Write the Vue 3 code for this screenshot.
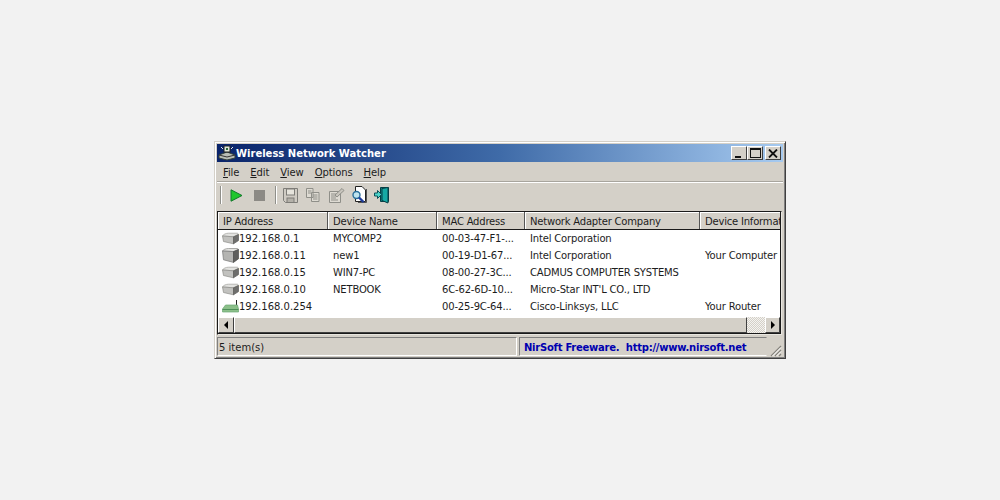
<script setup>
const menus = [
  { first: 'F', rest: 'ile' },
  { first: 'E', rest: 'dit' },
  { first: 'V', rest: 'iew' },
  { first: 'O', rest: 'ptions' },
  { first: 'H', rest: 'elp' },
]
const columns = ['IP Address', 'Device Name', 'MAC Address', 'Network Adapter Company', 'Device Informat']
const rows = [
  { ip: '192.168.0.1', name: 'MYCOMP2', mac: '00-03-47-F1-...', company: 'Intel Corporation', info: '', kind: 'pc' },
  { ip: '192.168.0.11', name: 'new1', mac: '00-19-D1-67...', company: 'Intel Corporation', info: 'Your Computer', kind: 'self' },
  { ip: '192.168.0.15', name: 'WIN7-PC', mac: '08-00-27-3C...', company: 'CADMUS COMPUTER SYSTEMS', info: '', kind: 'pc' },
  { ip: '192.168.0.10', name: 'NETBOOK', mac: '6C-62-6D-10...', company: 'Micro-Star INT\'L CO., LTD', info: '', kind: 'pc' },
  { ip: '192.168.0.254', name: '', mac: '00-25-9C-64...', company: 'Cisco-Linksys, LLC', info: 'Your Router', kind: 'router' },
]
</script>

<template>
  <div class="page">
    <div class="window">
      <div class="titlebar">
        <svg class="app-icon" width="18" height="16" viewBox="0 0 18 16">
          <path d="M1 10 L9 7 L17 10 L17 13 L9 15 L1 13 Z" fill="#b9bdb6" stroke="#33403a" stroke-width="1" />
          <path d="M1 10 L9 12 L17 10" fill="none" stroke="#333" stroke-width="1" />
          <rect x="6" y="1" width="6" height="6" fill="#dfe6d8" stroke="#222" />
          <rect x="8" y="3" width="2" height="2" fill="#2f6b3a" />
          <path d="M3 2 L5 4 M15 2 L13 4" stroke="#e8e8e8" stroke-width="1" />
        </svg>
        <span class="title">Wireless Network Watcher</span>
        <div class="caption-buttons">
          <button class="cap"><span class="glyph-min"></span></button>
          <button class="cap"><span class="glyph-max"></span></button>
          <button class="cap close">
            <svg width="10" height="9" viewBox="0 0 10 9"><path d="M1 0.5 L9 8.5 M9 0.5 L1 8.5" stroke="#111" stroke-width="1.8" /></svg>
          </button>
        </div>
      </div>

      <div class="menubar">
        <span v-for="m in menus" :key="m.first" class="menu"><u>{{ m.first }}</u>{{ m.rest }}</span>
      </div>

      <div class="toolbar">
        <span class="tsep"></span>
        <svg class="tool t-play" width="13" height="13" viewBox="0 0 13 13"><path d="M1 0.8 L12 6.5 L1 12.2 Z" fill="#1fc62c" stroke="#11782a" /></svg>
        <span class="stop"></span>
        <span class="tsep sep2"></span>
        <svg class="tool t-save" width="17" height="17" viewBox="0 0 17 17"><path d="M1.5 1.5 H15.5 V15.5 H3.5 L1.5 13.5 Z" fill="#cfcbc3" stroke="#7e7d78" /><rect x="4.5" y="2" width="8" height="6" fill="#e6e4dc" stroke="#7e7d78" /><rect x="5" y="11" width="7" height="4.5" fill="#b4b1a9" stroke="#7e7d78" /></svg>
        <svg class="tool t-copy" width="16" height="16" viewBox="0 0 16 16"><path d="M1.5 1.5 H8 V10.5 H1.5 Z M6.5 5.5 H14 V14.5 H6.5 Z" fill="#dedbd3" stroke="#8f8f89" /><path d="M3 4 H6.5 M3 6 H6 M8 8 H12.5 M8 10 H12.5 M8 12 H12.5" stroke="#8f8f89" /></svg>
        <svg class="tool t-props" width="17" height="17" viewBox="0 0 17 17"><path d="M1.5 4.5 H12.5 V15.5 H1.5 Z" fill="#dedbd3" stroke="#8f8f89" /><path d="M3 7 H8 M3 9 H9 M3 11 H8 M3 13 H10" stroke="#8f8f89" /><path d="M7 8 L14 1.5 L16 3.5 L9 10 Z" fill="#c8c5bd" stroke="#8f8f89" /></svg>
        <svg class="tool t-find" width="15" height="18" viewBox="0 0 15 18"><path d="M3.5 0.5 H10 L13.5 4 V15.5 H3.5 Z" fill="#fff" stroke="#222" /><path d="M14.5 3 V16.5 H6" fill="none" stroke="#555" /><circle cx="4.5" cy="9" r="3.5" fill="#bfe4ef" stroke="#2a6f9a" stroke-width="1.4" /><path d="M7 11.5 L11.5 16" stroke="#1d3c9c" stroke-width="2.4" /></svg>
        <svg class="tool t-exit" width="15" height="18" viewBox="0 0 15 18"><path d="M6.5 1.5 H14.5 V15.5 H6.5 Z" fill="#0f8f8a" stroke="#063f45" /><path d="M8 2.5 L14 1.5 V17 L8 14.5 Z" fill="#16aaa4" stroke="#073c44" /><path d="M0.5 7 H3.5 V4.5 L7.5 8.5 L3.5 12.5 V10 H0.5 Z" fill="#4fd6cc" stroke="#0a5058" /></svg>
      </div>

      <div class="listview">
        <div class="head">
          <div v-for="c in columns" :key="c" class="hcell">{{ c }}</div>
        </div>
        <div class="rows">
          <div v-for="r in rows" :key="r.ip" class="row">
            <div class="cell first">
              <svg v-if="r.kind === 'pc'" class="dev" width="17" height="13" viewBox="0 0 17 13">
                <path d="M0.5 4 C1 2.5 4 1.2 6.5 1.2 H15 C16 1.2 16.5 2 16 3 L12 4.8 Z" fill="#e3e3e0" stroke="#a0a09c" stroke-width="0.7" />
                <path d="M0.5 4 L11.5 4.8 V11.8 L1.5 9.5 Z" fill="#c2c2bf" stroke="#8c8c88" stroke-width="0.7" />
                <path d="M11.5 4.8 L16.5 2.4 V8.6 L11.5 11.8 Z" fill="#6e6e6c" stroke="#5a5a58" stroke-width="0.7" />
              </svg>
              <svg v-else-if="r.kind === 'self'" class="dev" width="17" height="15" viewBox="0 0 17 15">
                <path d="M0.5 3 C1 1.6 4 0.5 6.5 0.5 H15 C16 0.5 16.5 1.2 16 2 L12 3.6 Z" fill="#e3e3e0" stroke="#8d8d8a" stroke-width="0.7" />
                <path d="M0.5 3 L11.5 3.6 V14.4 L1.5 11.8 Z" fill="#b5b5b2" stroke="#777" stroke-width="0.7" />
                <path d="M11.5 3.6 L16.5 1.4 V10.8 L11.5 14.4 Z" fill="#5f5f5d" stroke="#4d4d4b" stroke-width="0.7" />
              </svg>
              <svg v-else class="dev" width="17" height="13" viewBox="0 0 17 13">
                <path d="M14.5 0 V6" stroke="#222" stroke-width="1" />
                <path d="M0.5 9 L3.5 5 H15.5 L16.5 9 V12 H0.5 Z" fill="#8cc08a" stroke="#6aa873" stroke-width="0.7" />
                <path d="M0.5 9.5 H16.5" stroke="#4f8f5a" stroke-width="1" />
              </svg>
              <span>{{ r.ip }}</span>
            </div>
            <div class="cell">{{ r.name }}</div>
            <div class="cell">{{ r.mac }}</div>
            <div class="cell">{{ r.company }}</div>
            <div class="cell">{{ r.info }}</div>
          </div>
        </div>
        <div class="hscroll">
          <button class="sbtn"><span class="arrow-left"></span></button>
          <div class="strack"><div class="sthumb"></div><div class="shatch"></div></div>
          <button class="sbtn end"><span class="arrow-right"></span></button>
        </div>
      </div>

      <div class="statusbar">
        <div class="spanel left">5 item(s)</div>
        <div class="spanel right">NirSoft Freeware.&nbsp; http://www.nirsoft.net</div>
        <svg class="grip" width="14" height="14" viewBox="0 0 14 14"><path d="M13 3 L3 13 M13 7 L7 13 M13 11 L11 13" stroke="#85837c" stroke-width="1.2" /><path d="M13 4.5 L4.5 13 M13 8.5 L8.5 13" stroke="#fff" stroke-width="1" /></svg>
      </div>
    </div>
  </div>
</template>

<style>
html, body { margin: 0; background: #f2f2f2; }
</style>

<style scoped>
.page {
  width: 1000px;
  height: 500px;
  box-sizing: border-box;
  padding: 141px 0 0 214px;
  background: #f2f2f2;
  overflow: hidden;
  font-family: "DejaVu Sans", Verdana, sans-serif;
  font-size: 10px;
  color: #1c1c1c;
}
.window {
  width: 572px;
  height: 218px;
  box-sizing: border-box;
  padding: 2px;
  background: #d4d0c8;
  border: 1px solid;
  border-color: #d4d0c8 #404040 #404040 #d4d0c8;
  box-shadow: inset 1px 1px 0 #fff, inset -1px -1px 0 #808080;
}
.titlebar {
  height: 18px;
  display: flex;
  align-items: center;
  background: linear-gradient(90deg, #0a246a 0%, #3f6ba8 50%, #a6caf0 100%);
  color: #fff;
  padding-right: 2px;
}
.app-icon { margin-left: 1px; flex: none; }
.title { font-weight: 700; font-size: 10px; }
.caption-buttons { margin-left: auto; display: flex; }
.cap {
  width: 16px;
  height: 14px;
  padding: 0;
  border: 1px solid;
  border-color: #fff #404040 #404040 #fff;
  background: #d4d0c8;
  display: flex;
  align-items: center;
  justify-content: center;
}
.close { margin-left: 2px; }
.glyph-min { width: 6px; height: 2px; background: #111; margin-top: 7px; margin-right: 3px; }
.glyph-max { width: 9px; height: 7px; border: 1px solid #111; border-top-width: 2px; }
.menubar {
  height: 20px;
  box-sizing: border-box;
  padding: 2px 0 0 6px;
  display: flex;
  align-items: center;
  gap: 11px;
  letter-spacing: -0.1px;
  border-bottom: 1px solid #a8a59e;
  box-shadow: 0 1px 0 #fff;
}
.menu { white-space: pre; }
.toolbar {
  height: 26px;
  display: flex;
  align-items: center;
  box-sizing: border-box;
  padding-left: 3px;
}
.tsep { width: 1px; height: 18px; background: #8f8f8a; box-shadow: 1px 0 0 #fff; flex: none; }
.tool { flex: none; margin-left: 8px; }
.t-play { margin-left: 9px; }
.stop { width: 11px; height: 11px; background: #8c8a85; margin-left: 11px; flex: none; }
.sep2 { margin-left: 10px; }
.t-save { margin-left: 6px; }
.t-copy { margin-left: 6px; }
.t-props { margin-left: 7px; }
.t-find { margin-left: 7px; }
.t-exit { margin-left: 7px; }
.listview {
  margin: 3px 1px 0 0;
  height: 124px;
  box-sizing: border-box;
  border: 1px solid #1a1a1a;
  border-right-color: #e8e6e0;
  border-bottom-color: #e8e6e0;
  background: #fff;
  display: flex;
  flex-direction: column;
  box-shadow: inset -1px -1px 0 #1a1a1a;
}
.head {
  height: 17px;
  flex: none;
  display: grid;
  grid-template-columns: 110px 109px 88px 175px 1fr;
  background: #d4d0c8;
  border-bottom: 1px solid #1a1a1a;
  margin-right: 1px;
}
.hcell {
  padding-left: 5px;
  line-height: 19px;
  letter-spacing: -0.2px;
  border-right: 1px solid #555;
  box-shadow: inset 1px 1px 0 #fff;
  overflow: hidden;
  white-space: nowrap;
}
.hcell:last-child { border-right: 0; }
.rows { flex: 1; margin-right: 1px; }
.row {
  height: 17px;
  display: grid;
  grid-template-columns: 110px 109px 88px 175px 1fr;
  line-height: 17px;
}
.cell { padding-left: 5px; white-space: nowrap; overflow: hidden; letter-spacing: -0.17px; }
.first { display: flex; align-items: center; padding-left: 4px; letter-spacing: 0; }
.dev { flex: none; }
.hscroll {
  height: 16px;
  flex: none;
  display: flex;
  margin-right: 1px;
  margin-bottom: 1px;
}
.sbtn {
  width: 16px;
  height: 16px;
  padding: 0;
  border: 1px solid;
  border-color: #fff #404040 #404040 #fff;
  background: #d4d0c8;
  display: flex;
  align-items: center;
  justify-content: center;
  flex: none;
}
.end { width: 15px; }
.arrow-left { border: 4px solid transparent; border-right: 4px solid #000; border-left: 0; }
.arrow-right { border: 4px solid transparent; border-left: 4px solid #000; border-right: 0; }
.strack { flex: 1; display: flex; }
.sthumb {
  flex: 1;
  background: #d4d0c8;
  box-sizing: border-box;
  border: 1px solid;
  border-color: #fff #404040 #404040 #fff;
}
.shatch {
  width: 18px;
  background: repeating-conic-gradient(#d4d0c8 0 25%, #f4f3f0 0 50%) 0 0 / 2px 2px;
}
.statusbar {
  height: 22px;
  margin-top: 2px;
  display: flex;
  position: relative;
}
.spanel {
  box-sizing: border-box;
  height: 19px;
  line-height: 19px;
  border: 1px solid;
  border-color: #808080 #fff #fff #808080;
  white-space: nowrap;
}
.left { width: 300px; padding-left: 1px; }
.right {
  margin-left: 2px;
  width: 248px;
  padding-left: 4px;
  color: #0000b0;
  font-weight: 700;
  letter-spacing: -0.25px;
  border-color: #808080 #d4d0c8 #fff #808080;
}
.grip { position: absolute; right: 1px; bottom: 2px; }
</style>
